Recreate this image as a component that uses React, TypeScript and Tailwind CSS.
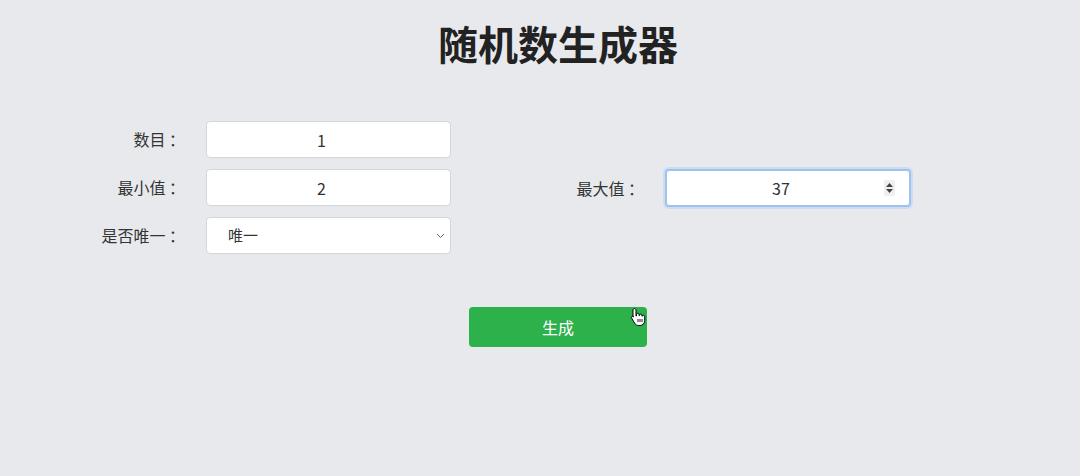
import React from "react";

const font = { fontFamily: '"Noto Sans CJK SC", "Noto Sans", sans-serif' };

function Label({ children }: { children: React.ReactNode }) {
  return (
    <div className="w-[96px] shrink-0 text-right text-[16px] text-[#333] whitespace-nowrap leading-[37px]">
      {children}
    </div>
  );
}

export default function App() {
  return (
    <div className="w-[1080px] h-[476px] bg-[#e8e9ed] overflow-hidden relative" style={font}>
      <div className="pl-[36px] pt-[19px]">
        <h1 className="text-center text-[40px] leading-[48px] font-bold text-[#222]">随机数生成器</h1>
      </div>

      <div className="pl-[89px] pt-[54px] flex">
        <div className="w-[459px] flex flex-col gap-[11px]">
          <div className="flex items-center gap-[21px]">
            <Label>数目 ：</Label>
            <div className="w-[245px] h-[37px] bg-white border border-[#d5d6d9] rounded-[4px] flex items-center justify-center pr-[14px] text-[16px] text-[#333]">
              1
            </div>
          </div>
          <div className="flex items-center gap-[21px]">
            <Label>最小值 ：</Label>
            <div className="w-[245px] h-[37px] bg-white border border-[#d5d6d9] rounded-[4px] flex items-center justify-center pr-[14px] text-[16px] text-[#333]">
              2
            </div>
          </div>
          <div className="flex items-center gap-[21px]">
            <Label>是否唯一 ：</Label>
            <div className="w-[245px] h-[37px] bg-white border border-[#d5d6d9] rounded-[4px] flex items-center pl-[21px] pr-[5px] text-[15px] text-[#333]">
              <span className="flex-1">唯一</span>
              <svg width="9" height="6" viewBox="0 0 9 6" fill="none">
                <path d="M1 1l3.5 3.5L8 1" stroke="#666" strokeWidth="1" />
              </svg>
            </div>
          </div>
        </div>
        <div className="w-[459px] pt-[48px]">
          <div className="flex items-center gap-[21px]">
            <Label>最大值 ：</Label>
            <div className="w-[246px] h-[38px] bg-white border-2 border-[#9ec3f0] rounded-[4px] shadow-[0_0_0_2px_rgba(160,196,240,0.35)] flex items-center pr-[14px] text-[16px] text-[#333] relative">
              <span className="flex-1 text-center">37</span>
              <div className="absolute right-[14px] top-[9px] w-[11px] h-[16px] bg-[#efefef] rounded-[2px] flex flex-col items-center justify-center gap-[2px]">
                <svg width="7" height="4" viewBox="0 0 7 4"><path d="M0 4L3.5 0L7 4Z" fill="#444" /></svg>
                <svg width="7" height="4" viewBox="0 0 7 4"><path d="M0 0L3.5 4L7 0Z" fill="#444" /></svg>
              </div>
            </div>
          </div>
        </div>
      </div>

      <div className="pl-[36px] pt-[53px] flex justify-center">
        <div className="w-[178px] h-[40px] bg-[#2db14a] rounded-[4px] flex items-center justify-center text-white text-[16px] relative">
          生成
          <svg className="absolute left-[161px] top-[0px]" width="16" height="20" viewBox="0 0 16 20">
            <path
              d="M4.5 1.5c.8 0 1.5.7 1.5 1.5v6l.5-.1V7.5c0-.8.6-1.3 1.3-1.3s1.2.5 1.2 1.3v1l.5.1v-.4c0-.7.6-1.2 1.2-1.2.7 0 1.2.5 1.2 1.2v.9l.4.1c.1-.6.6-1 1.2-1 .7 0 1.2.6 1.2 1.2v4.3c0 2.6-2 4.8-4.6 4.8H8.5c-1.7 0-3-.9-3.9-2.3L1.6 11c-.4-.6-.2-1.3.4-1.7.6-.3 1.3-.2 1.7.4L3 9.5V3c0-.8.7-1.5 1.5-1.5z"
              fill="white"
              stroke="black"
              strokeWidth="1"
            />
            <path d="M8 12v3M10 12v3M12 12v3" stroke="black" strokeWidth="0.9" />
          </svg>
        </div>
      </div>
    </div>
  );
}
